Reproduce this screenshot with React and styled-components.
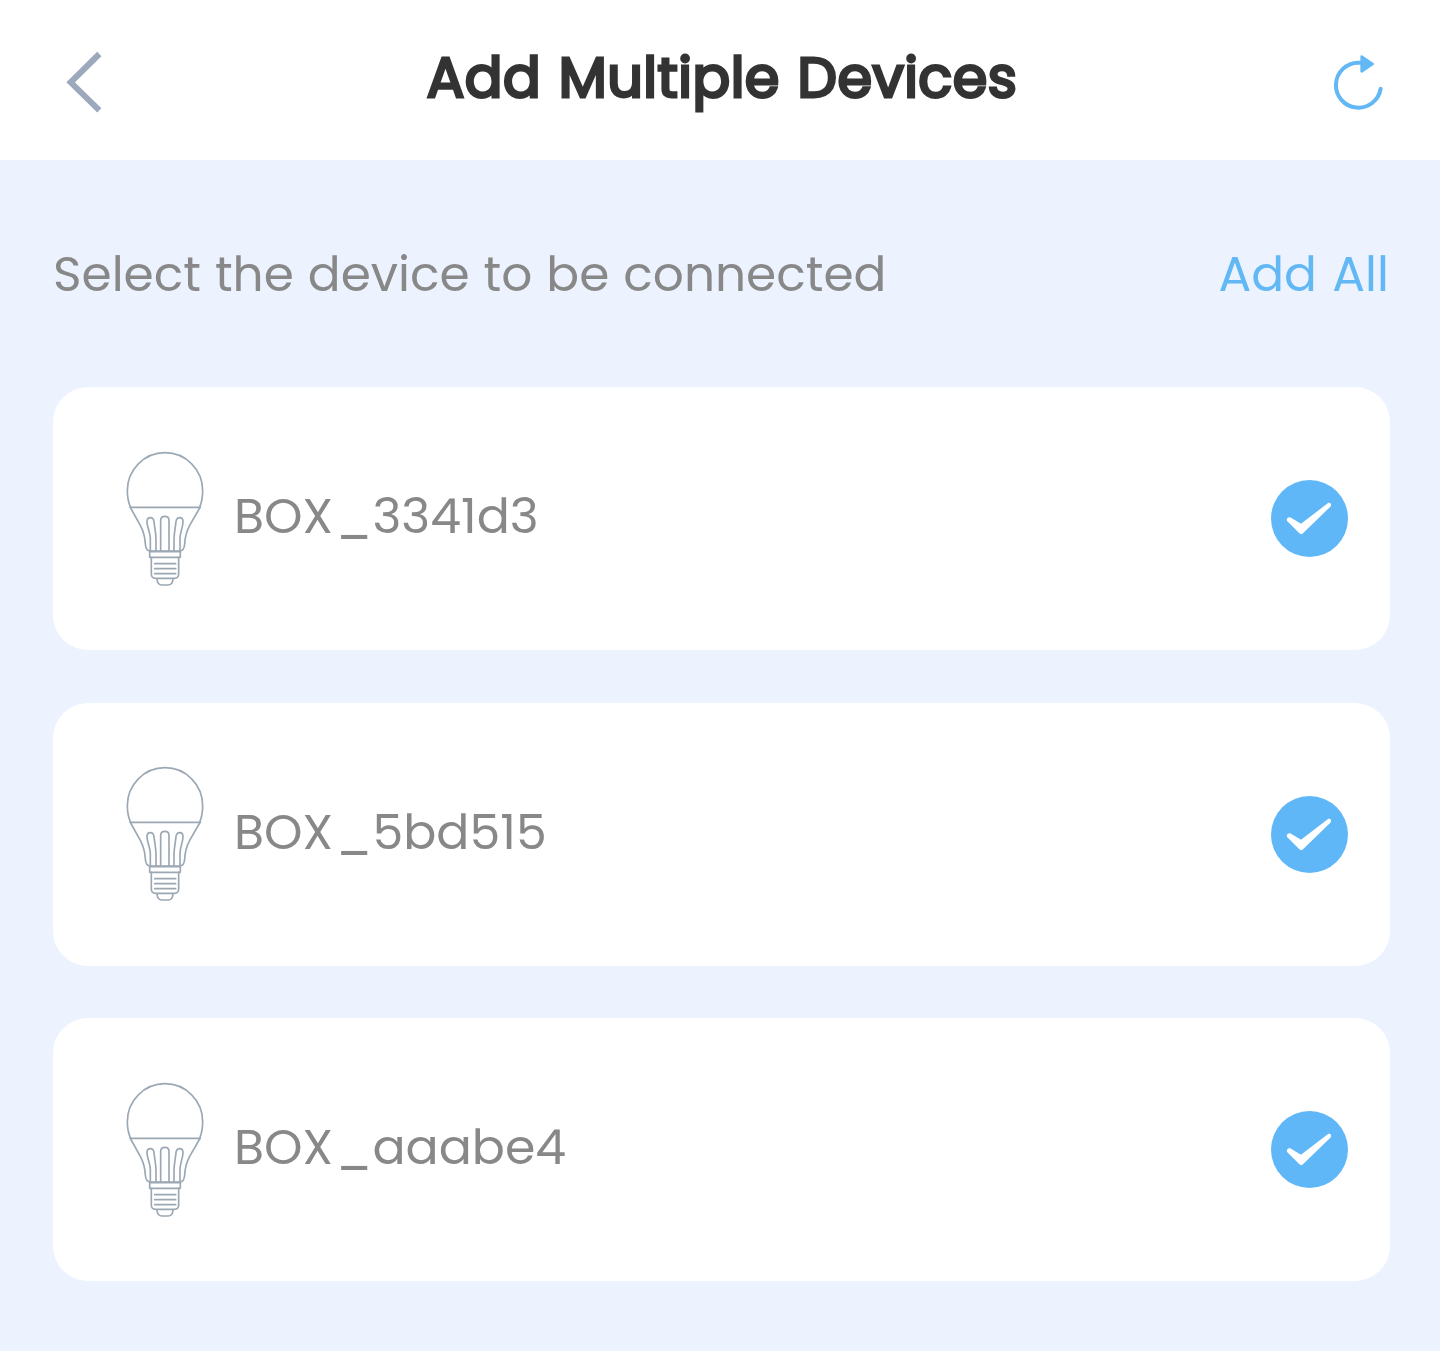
import React from "react";
import styled, { createGlobalStyle } from "styled-components";

const GlobalStyle = createGlobalStyle`
  *, *::before, *::after { box-sizing: border-box; }
  body {
    margin: 0;
    background: #ecf3ff;
    font-family: Poppins, Inter, "Open Sans", sans-serif;
  }
  button {
    border: 0;
    padding: 0;
    background: none;
    font: inherit;
    color: inherit;
  }
  svg { display: block; }
`;

const Page = styled.div`
  min-height: 1351px;
  background: #ecf3ff;
`;

const Header = styled.header`
  display: grid;
  grid-template-columns: 70px 1fr 80px;
  height: 160px;
  padding: 40px 40px 0 50px;
  background: #fff;
`;

const Title = styled.h1`
  margin: 0;
  padding-left: 4px;
  height: 76px;
  line-height: 76px;
  text-align: center;
  font-size: 55.7px;
  font-weight: 400;
  letter-spacing: 0.5px;
  word-spacing: 2.3px;
  -webkit-text-stroke: 3px #333;
  white-space: nowrap;
  color: #333;
`;

const IconButton = styled.button`
  height: 85px;
`;

const Toolbar = styled.div`
  display: flex;
  justify-content: space-between;
  height: 227px;
  padding: 80px 51px 0 53px;
  font-size: 48.6px;
  line-height: 68px;
  white-space: nowrap;
`;

const Hint = styled.span`
  color: #888;
  word-spacing: 1px;
`;

const AddAll = styled.button`
  height: 68px;
  color: #62b8f4;
  word-spacing: 2.5px;
`;

const DeviceList = styled.ul`
  display: flex;
  flex-direction: column;
  gap: 52.6px;
  margin: 0;
  padding: 0 50px 0 53px;
  list-style: none;
`;

const DeviceCard = styled.li`
  display: flex;
  align-items: center;
  height: 263px;
  padding: 0 42px 0 57px;
  border-radius: 35px;
  background: #fff;
`;

const DeviceName = styled.span`
  flex: 1;
  padding: 0 0 5px 14px;
  font-size: 49px;
  line-height: 60px;
  color: #888;
  white-space: nowrap;
`;

const Separator = styled.span`
  margin: 0 0.5px 0 3px;
`;

const BackIcon = () => (
  <svg width="70" height="85" viewBox="0 0 210 255" fill="none">
    <path d="M148 42L62 127L148 211" stroke="#9ca8bb" strokeWidth="18" />
  </svg>
);

const RefreshIcon = () => (
  <svg width="80" height="85" viewBox="0 0 240 255" fill="none">
    <path d="M124 68H115A67.5 67.5 0 1 0 182 146" stroke="#62b8f4" strokeWidth="12" strokeLinecap="round" />
    <path d="M125 50L158 72L125 94Z" fill="#62b8f4" stroke="#62b8f4" strokeWidth="8" strokeLinejoin="round" />
  </svg>
);

const BulbSvg = styled.svg`
  margin-bottom: 3px;
`;

const BulbIcon = () => (
  <BulbSvg width="110" height="155" viewBox="0 0 330 465" fill="none" stroke="#9ba8b4" strokeWidth="5" strokeLinecap="round" strokeLinejoin="round">
    <path d="M62 202C55 187 52 169 52 152A113 114 0 0 1 278 152C278 169 275 187 269 202" />
    <path d="M60 202H271" />
    <path d="M62 204L91 256C102 277 105 290 106 312C107 326 110 333 121 333H209C220 333 223 326 224 312C225 290 228 277 239 256L269 204" />
    <path d="M121 333V296C121 278 111 260 111 245C111 229 130 229 132 245C134 265 138 280 138 300V333" />
    <path d="M152 333V241C152 225 177 225 177 241V333" />
    <path d="M192 333V300C192 280 196 265 198 245C200 229 219 229 219 245C219 260 210 278 210 296V333" />
    <path d="M119 335H211V352H119Z" />
    <path d="M124 352V402Q124 415 137 415H193Q206 415 206 402V352" />
    <path d="M134 371H197M134 386H197M134 401H197" />
    <path d="M141 417Q142 435 156 435H174Q188 435 189 417" />
  </BulbSvg>
);

const CheckIcon = () => (
  <svg width="77" height="77" viewBox="0 0 231 231">
    <circle cx="115.5" cy="115.5" r="115.5" fill="#5fb7f8" />
    <path d="M49 124C44 117 52 108 60 113L90 131L170 70C177 65 184 74 178 80L96 160Q91 165 85 160Z" fill="#fff" />
  </svg>
);

const devices = [
  { type: "BOX", id: "3341d3" },
  { type: "BOX", id: "5bd515" },
  { type: "BOX", id: "aaabe4" },
];

export default function App() {
  return (
    <Page>
      <GlobalStyle />
      <Header>
        <IconButton aria-label="Back"><BackIcon /></IconButton>
        <Title>Add Multiple Devices</Title>
        <IconButton aria-label="Refresh"><RefreshIcon /></IconButton>
      </Header>
      <Toolbar>
        <Hint>Select the device to be connected</Hint>
        <AddAll>Add All</AddAll>
      </Toolbar>
      <DeviceList>
        {devices.map(({ type, id }) => (
          <DeviceCard key={id}>
            <BulbIcon />
            <DeviceName>{type}<Separator>_</Separator>{id}</DeviceName>
            <CheckIcon />
          </DeviceCard>
        ))}
      </DeviceList>
    </Page>
  );
}
